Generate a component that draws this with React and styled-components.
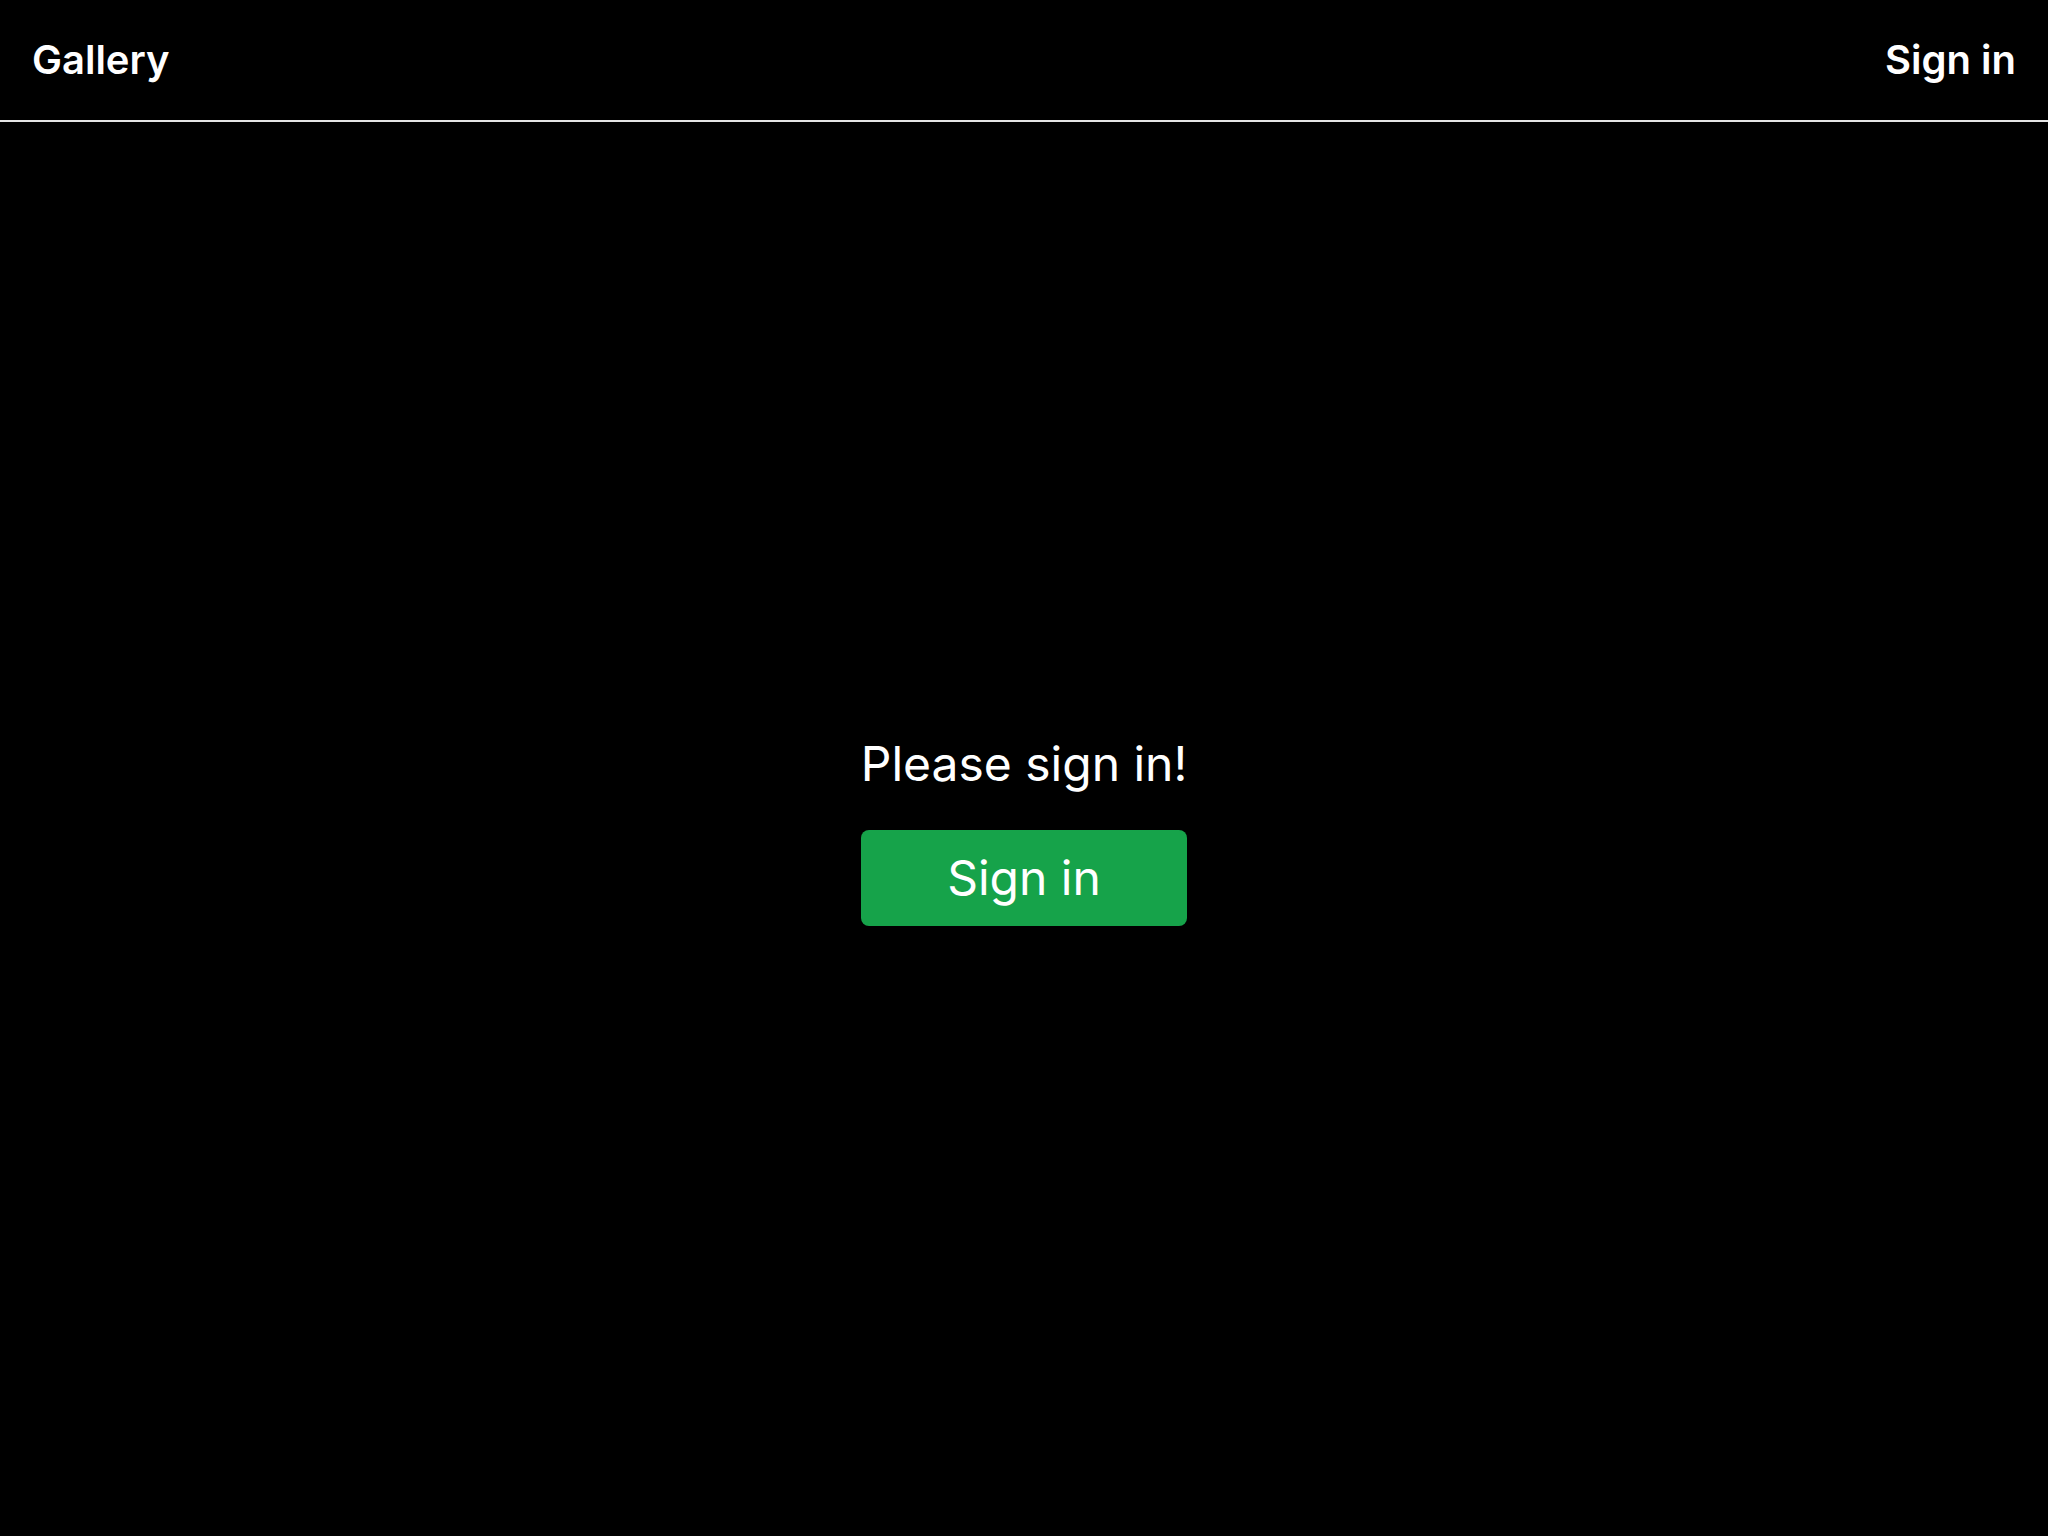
import React from "react";
import styled, { createGlobalStyle } from "styled-components";

const GlobalStyle = createGlobalStyle`
  html, body {
    margin: 0;
    padding: 0;
    background: #000;
    color: #fff;
    font-family: Inter, "Noto Sans", sans-serif;
  }
  #root {
    min-height: 100vh;
  }
`;

const Page = styled.div`
  min-height: 100vh;
  display: flex;
  flex-direction: column;
  background: #000;
`;

const Header = styled.header`
  height: 122px;
  padding: 0 32px;
  display: flex;
  align-items: center;
  justify-content: space-between;
  border-bottom: 2px solid #e5e5e5;
  box-sizing: border-box;
`;

const Brand = styled.a`
  font-size: 40px;
  font-weight: 600;
  line-height: 1.5;
  color: #fff;
  text-decoration: none;
`;

const NavButton = styled.button`
  background: none;
  border: 0;
  padding: 0;
  font-family: inherit;
  font-size: 40px;
  font-weight: 600;
  line-height: 1.5;
  color: #fff;
  cursor: pointer;
`;

const Main = styled.main`
  flex: 1;
  display: flex;
  align-items: center;
  justify-content: center;
  padding-bottom: 4px;
`;

const Prompt = styled.section`
  display: flex;
  flex-direction: column;
  align-items: stretch;
  gap: 30px;
`;

const Message = styled.p`
  margin: 0;
  font-size: 48px;
  line-height: 1.5;
  text-align: center;
`;

const SignInButton = styled.button`
  height: 96px;
  border: 0;
  border-radius: 8px;
  background: #16a34a;
  color: #fff;
  font-family: inherit;
  font-size: 48px;
  line-height: 1.5;
  cursor: pointer;
`;

export default function App() {
  return (
    <Page>
      <GlobalStyle />
      <Header>
        <Brand href="#">Gallery</Brand>
        <NavButton>Sign in</NavButton>
      </Header>
      <Main>
        <Prompt>
          <Message>Please sign in!</Message>
          <SignInButton>Sign in</SignInButton>
        </Prompt>
      </Main>
    </Page>
  );
}
